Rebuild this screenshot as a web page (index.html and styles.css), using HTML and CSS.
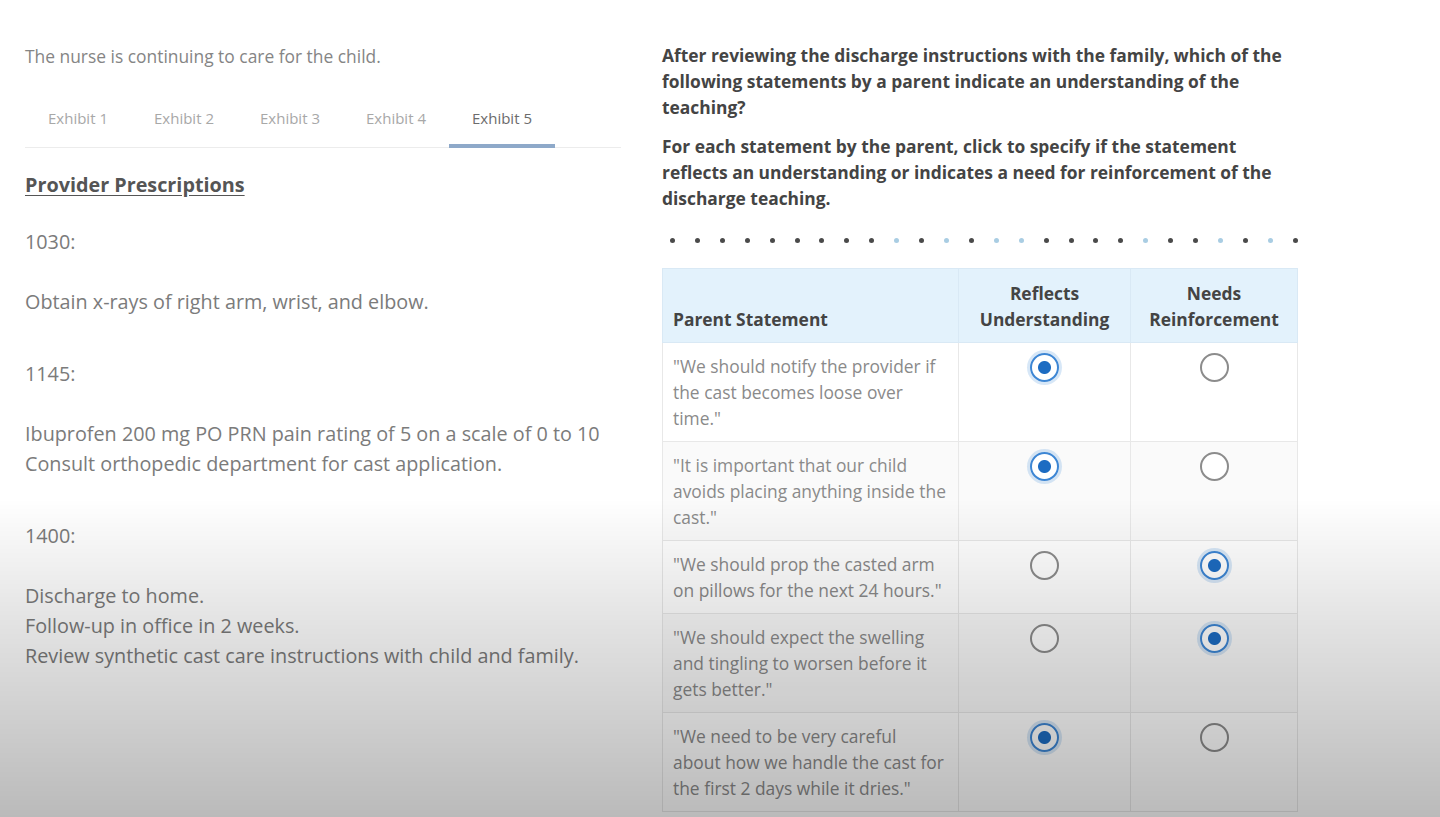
FILE: index.html
```html
<!DOCTYPE html>
<html lang="en">
<head>
    <meta charset="UTF-8">
    <meta name="viewport" content="width=device-width, initial-scale=1.0">
    <title>Case Study - Exhibit 5</title>
    <link rel="stylesheet" href="styles.css">
</head>
<body>
<div class="page">
    <div class="left-col">
        <p class="intro">The nurse is continuing to care for the child.</p>
        <div class="tabs">
            <div class="tab">Exhibit 1</div>
            <div class="tab">Exhibit 2</div>
            <div class="tab">Exhibit 3</div>
            <div class="tab">Exhibit 4</div>
            <div class="tab active">Exhibit 5</div>
        </div>
        <h2 class="exhibit-title">Provider Prescriptions</h2>
        <p class="time">1030:</p>
        <p class="orders">Obtain x-rays of right arm, wrist, and elbow.</p>
        <p class="time">1145:</p>
        <p class="orders">Ibuprofen 200 mg PO PRN pain rating of 5 on a scale of 0 to 10<br>Consult orthopedic department for cast application.</p>
        <p class="time">1400:</p>
        <p class="orders">Discharge to home.<br>Follow-up in office in 2 weeks.<br>Review synthetic cast care instructions with child and family.</p>
    </div>

    <div class="right-col">
        <p class="question">After reviewing the discharge instructions with the family, which of the following statements by a parent indicate an understanding of the teaching?</p>
        <p class="question second">For each statement by the parent, click to specify if the statement reflects an understanding or indicates a need for reinforcement of the discharge teaching.</p>

        <div class="dots">
            <span></span><span></span><span></span><span></span><span></span><span></span><span></span><span></span><span></span>
            <span class="light"></span><span></span><span class="light"></span><span></span><span class="light"></span><span class="light"></span>
            <span></span><span></span><span></span><span></span><span class="light"></span><span></span><span></span>
            <span class="light"></span><span></span><span class="light"></span><span></span>
        </div>

        <table class="answer-table">
            <thead>
                <tr>
                    <th class="statement-col">Parent Statement</th>
                    <th class="choice-col">Reflects<br>Understanding</th>
                    <th class="choice-col">Needs<br>Reinforcement</th>
                </tr>
            </thead>
            <tbody>
                <tr>
                    <td class="statement">"We should notify the provider if the cast becomes loose over time."</td>
                    <td class="choice"><input type="radio" name="s1" checked></td>
                    <td class="choice"><input type="radio" name="s1"></td>
                </tr>
                <tr>
                    <td class="statement">"It is important that our child avoids placing anything inside the cast."</td>
                    <td class="choice"><input type="radio" name="s2" checked></td>
                    <td class="choice"><input type="radio" name="s2"></td>
                </tr>
                <tr>
                    <td class="statement">"We should prop the casted arm on pillows for the next 24 hours."</td>
                    <td class="choice"><input type="radio" name="s3"></td>
                    <td class="choice"><input type="radio" name="s3" checked></td>
                </tr>
                <tr>
                    <td class="statement">"We should expect the swelling and tingling to worsen before it gets better."</td>
                    <td class="choice"><input type="radio" name="s4"></td>
                    <td class="choice"><input type="radio" name="s4" checked></td>
                </tr>
                <tr>
                    <td class="statement">"We need to be very careful about how we handle the cast for the first 2 days while it dries."</td>
                    <td class="choice"><input type="radio" name="s5" checked></td>
                    <td class="choice"><input type="radio" name="s5"></td>
                </tr>
            </tbody>
        </table>
    </div>
</div>
<div class="shade"></div>
</body>
</html>
```

FILE: styles.css
```css
:root {
    --text-main: #444;
    --text-sub: #7b7b7b;
    --text-light: #8a8a8a;
    --tab-line: #8ea9c9;
    --radio-blue: #3d86d4;
    --radio-dot: #1d6cc2;
    --header-bg: #e3f2fc;
    --cell-border: #e8e8e8;
}

html, body {
    height: 100%;
}

body {
    margin: 0;
    font-family: "Open Sans", "Noto Sans", sans-serif;
    background-color: #fff;
    color: var(--text-sub);
    overflow: hidden;
}

.page {
    display: flex;
    gap: 41px;
    padding: 42px 0 0 25px;
}

.left-col {
    width: 596px;
    flex-shrink: 0;
}

.intro {
    margin: 3px 0 0;
    font-size: 17.4px;
    line-height: 22px;
    color: #858585;
}

.tabs {
    display: flex;
    margin-top: 30px;
    border-bottom: 1px solid #ececec;
}

.tab {
    width: 106px;
    text-align: center;
    font-size: 15px;
    line-height: 20px;
    padding: 11px 0 16px;
    color: #a8a8a8;
    border-bottom: 4px solid transparent;
    margin-bottom: -1px;
}

.tab.active {
    color: #6c6c6c;
    border-bottom-color: var(--tab-line);
}

.exhibit-title {
    margin: 22px 0 27px;
    font-size: 19.8px;
    line-height: 30px;
    font-weight: 700;
    color: #555;
    text-decoration: underline;
    text-underline-offset: 3px;
}

.time,
.orders {
    margin: 0;
    font-size: 19.8px;
    line-height: 30px;
}

.time {
    margin-bottom: 30px;
}

.orders {
    margin-bottom: 42px;
}

.right-col {
    width: 640px;
    flex-shrink: 0;
}

.question {
    margin: 0;
    font-size: 17.4px;
    line-height: 26px;
    font-weight: 700;
    color: var(--text-main);
    width: 636px;
}

.question.second {
    margin-top: 13px;
}

.dots {
    display: flex;
    justify-content: space-between;
    width: 628px;
    margin: 27px 0 25px 8px;
}

.dots span {
    width: 5px;
    height: 5px;
    border-radius: 50%;
    background-color: #4a4a4a;
}

.dots span.light {
    background-color: #a9cde3;
}

.answer-table {
    width: 636px;
    border-collapse: collapse;
    table-layout: fixed;
}

.answer-table th {
    box-sizing: border-box;
    background-color: var(--header-bg);
    color: var(--text-main);
    font-size: 17.4px;
    line-height: 26px;
    font-weight: 700;
    padding: 11px 10px 10px;
    vertical-align: bottom;
    border: 1px solid #d9e9f5;
}

.statement-col {
    width: 296px;
    text-align: left;
}

.choice-col {
    text-align: center;
}

.answer-table th:nth-child(2) {
    width: 172px;
}

.answer-table td {
    border: 1px solid var(--cell-border);
    vertical-align: top;
    padding: 10px 10px;
}

.answer-table tbody tr:nth-child(even) td {
    background-color: #fafafa;
}

.statement {
    font-size: 17.4px;
    line-height: 26px;
    color: var(--text-light);
}

.choice {
    text-align: center;
}

.choice input[type="radio"] {
    appearance: none;
    -webkit-appearance: none;
    width: 29px;
    height: 29px;
    margin: 0;
    border: 2px solid #8c8c8c;
    border-radius: 50%;
    background-color: #fff;
    cursor: pointer;
    display: inline-block;
    vertical-align: top;
    box-sizing: border-box;
}

.choice input[type="radio"]:checked {
    border-color: var(--radio-blue);
    box-shadow: 0 0 0 3px rgba(74, 144, 217, 0.22);
    background: radial-gradient(circle, var(--radio-dot) 0, var(--radio-dot) 6px, #fff 7px);
}

.shade {
    position: fixed;
    inset: 0;
    pointer-events: none;
    background: linear-gradient(to bottom, rgba(0, 0, 0, 0) 0, rgba(0, 0, 0, 0) 61%, rgba(0, 0, 0, 0.1) 75%, rgba(0, 0, 0, 0.27) 100%);
}
```
